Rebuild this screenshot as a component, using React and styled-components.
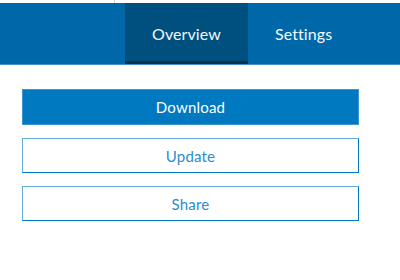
import React from 'react'
import styled, { createGlobalStyle } from 'styled-components'

const Global = createGlobalStyle`
  body {
    margin: 0;
    background: #fff;
    font-family: Lato, "Open Sans", sans-serif;
  }
`

const TopStrip = styled.div`
  height: 3px;
  display: flex;
  background: #fff;
`

const StripCell = styled.div`
  width: 114px;
  border-right: 1px solid #d4d4d4;
`

const Header = styled.div`
  height: 61px;
  background: #0068a8;
  border-bottom: 1px solid #4a93c6;
  display: flex;
  padding-left: 125px;
`

const Tab = styled.div`
  display: flex;
  align-items: center;
  justify-content: center;
  padding: 3px 27px 0;
  box-sizing: border-box;
  height: 100%;
  color: #f4f8fb;
  font-size: 16px;
  letter-spacing: 0.1px;
  background: ${p => (p.active ? '#00507f' : 'transparent')};
  border-bottom: 3px solid ${p => (p.active ? '#00344f' : 'transparent')};
`

const Body = styled.div`
  display: flex;
  flex-direction: column;
  gap: 13px;
  width: 337px;
  padding: 24px 0 0 22px;
`

const Button = styled.div`
  height: ${p => (p.primary ? 36 : 35)}px;
  box-sizing: border-box;
  display: flex;
  align-items: center;
  justify-content: center;
  font-size: 15px;
  letter-spacing: 0.2px;
  background: ${p => (p.primary ? '#0079c1' : '#fff')};
  color: ${p => (p.primary ? '#fff' : '#2d8ccb')};
  border: 1px solid ${p => (p.primary ? '#3d96d0' : '#0079c1')};
  border-top-color: ${p => (p.primary ? '#3d96d0' : '#66aedb')};
  border-left-color: ${p => (p.primary ? '#3d96d0' : '#66aedb')};
`

export default function App() {
  return (
    <>
      <Global />
      <TopStrip>
        <StripCell />
      </TopStrip>
      <Header>
        <Tab active>Overview</Tab>
        <Tab>Settings</Tab>
      </Header>
      <Body>
        <Button primary>Download</Button>
        <Button>Update</Button>
        <Button>Share</Button>
      </Body>
    </>
  )
}
